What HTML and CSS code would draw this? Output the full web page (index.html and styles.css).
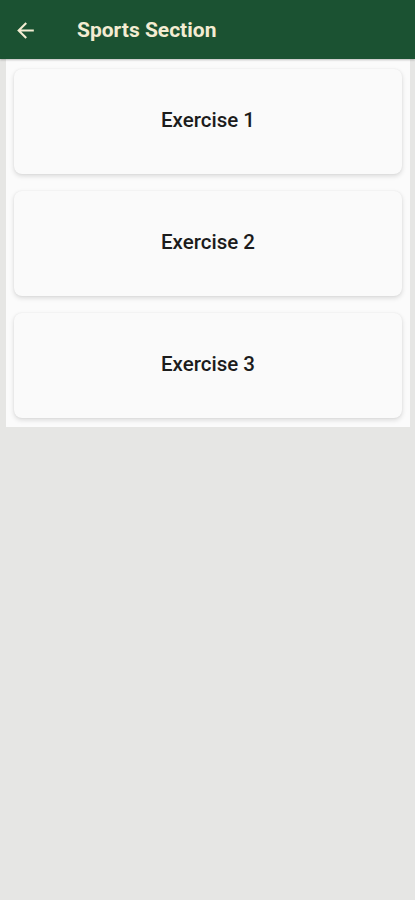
FILE: index.html
```html
<!DOCTYPE html>
<html>
<head>
<meta charset="utf-8">
<link rel="stylesheet" href="styles.css">
</head>
<body>
<header class="appbar">
  <svg class="back" width="25" height="25" viewBox="0 0 24 24"><path d="M20 11H7.83l5.59-5.59L12 4l-8 8 8 8 1.41-1.41L7.83 13H20v-2z" fill="#f3ecd2"/></svg>
  <h1 class="title">Sports Section</h1>
</header>
<main class="panel">
  <div class="card">Exercise 1</div>
  <div class="card">Exercise 2</div>
  <div class="card">Exercise 3</div>
</main>
</body>
</html>
```
FILE: styles.css
```css
html, body { margin: 0; padding: 0; }
body {
  background: #e6e6e4;
  font-family: Roboto, "Liberation Sans", sans-serif;
  width: 415px;
  min-height: 900px;
}
.appbar {
  height: 59px;
  background: #1b5232;
  display: flex;
  align-items: center;
  padding-left: 13px;
  box-sizing: border-box;
  box-shadow: 0 1px 2px rgba(0,0,0,0.25);
  position: relative;
  z-index: 1;
}
.back { display: block; margin-top: 1px; }
.title {
  margin: 0 0 0 39px;
  font-size: 21px;
  font-weight: 700;
  color: #f3ecd2;
  letter-spacing: 0;
}
.panel {
  margin: 0 5px 0 6px;
  background: #fbfbfb;
  padding: 10px 8px 9px 8px;
  display: flex;
  flex-direction: column;
  gap: 17px;
}
.card {
  height: 105px;
  background: #fafafa;
  border-radius: 8px;
  box-shadow: 0 2px 5px rgba(0,0,0,0.14), 0 0 2px rgba(0,0,0,0.06);
  display: flex;
  align-items: center;
  justify-content: center;
  padding-bottom: 3px;
  box-sizing: border-box;
  font-size: 20.5px;
  font-weight: 500;
  color: #1c1c1c;
}
```
